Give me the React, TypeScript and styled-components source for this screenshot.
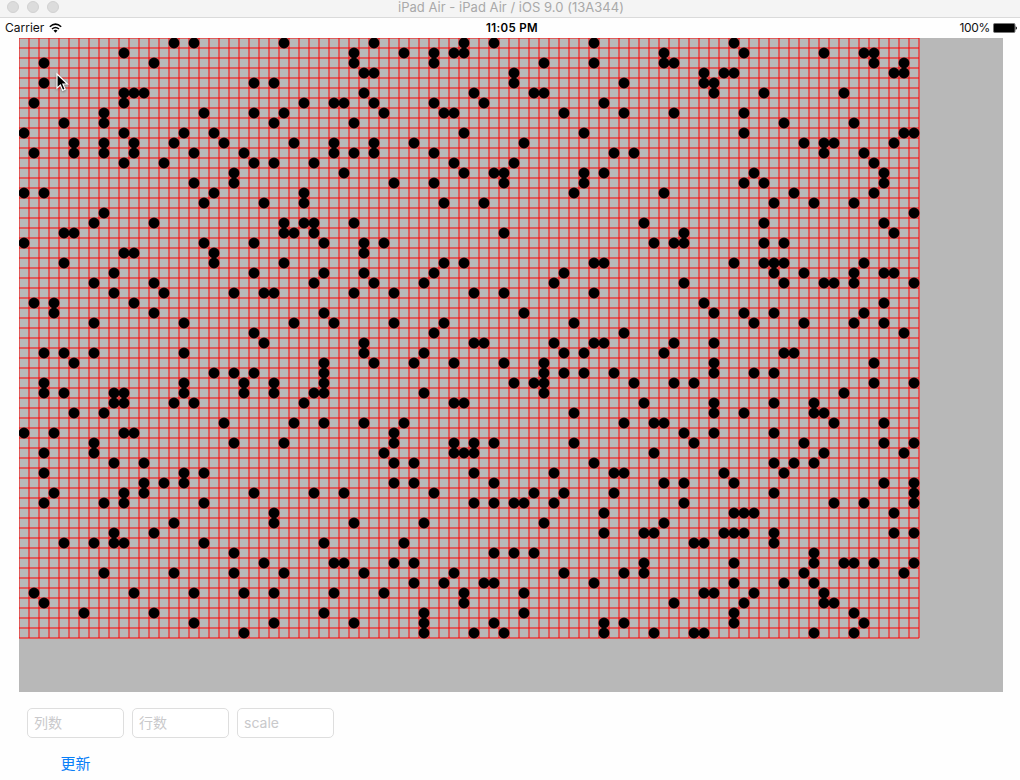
import React from "react";
import styled, { createGlobalStyle } from "styled-components";

const GlobalStyle = createGlobalStyle`
  * { box-sizing: border-box; }
  body {
    margin: 0;
    background: #fefefe;
    font-family: Inter, "Noto Sans CJK SC", sans-serif;
  }
`;

const CELL = 10;
const COLS = 90;
const ROWS = 60;

/* Live columns of every row, top to bottom. */
const LIVE: number[][] = [
  [15, 17, 26, 35, 44, 47, 57, 71],
  [10, 33, 38, 41, 43, 44, 64, 72, 80, 84, 85],
  [2, 13, 33, 41, 52, 57, 64, 65, 85, 88],
  [34, 35, 49, 68, 70, 71, 87, 88],
  [2, 23, 25, 49, 60, 68, 69],
  [10, 11, 12, 34, 45, 51, 52, 69, 74, 82],
  [1, 10, 28, 31, 32, 35, 41, 46, 58],
  [8, 18, 23, 26, 36, 42, 43, 54, 60, 65, 72],
  [4, 8, 25, 33, 76, 83],
  [0, 10, 16, 19, 44, 56, 72, 88, 89],
  [5, 8, 11, 15, 20, 27, 31, 35, 39, 50, 78, 80, 81, 87],
  [1, 5, 8, 11, 17, 22, 31, 33, 35, 41, 59, 61, 80, 84],
  [10, 14, 23, 25, 29, 43, 49, 85],
  [21, 32, 44, 47, 48, 56, 58, 73, 86],
  [17, 21, 37, 41, 48, 56, 72, 74, 86],
  [0, 2, 19, 28, 55, 64, 77, 85],
  [18, 24, 28, 42, 46, 75, 79, 83],
  [8, 89],
  [7, 13, 26, 28, 29, 33, 62, 74, 86],
  [4, 5, 26, 27, 29, 48, 66, 87],
  [0, 18, 23, 30, 34, 36, 63, 65, 66, 74, 76],
  [10, 11, 19, 34],
  [4, 19, 26, 42, 44, 57, 58, 71, 74, 75, 76, 84],
  [9, 23, 30, 34, 41, 54, 75, 78, 83, 86, 87],
  [7, 13, 29, 35, 40, 53, 66, 76, 80, 81, 83, 89],
  [9, 14, 21, 24, 25, 33, 37, 45, 48, 57],
  [1, 3, 11, 68, 86],
  [3, 13, 30, 50, 69, 72, 75, 84],
  [7, 16, 27, 31, 37, 42, 55, 73, 78, 83, 86],
  [23, 41, 60, 88],
  [24, 34, 45, 46, 53, 57, 58, 65, 69],
  [2, 4, 7, 16, 34, 40, 54, 56, 64, 76, 77],
  [5, 30, 35, 39, 43, 48, 52, 69, 85],
  [19, 21, 23, 30, 52, 54, 56, 59, 69, 73, 75],
  [2, 16, 22, 25, 30, 49, 51, 52, 61, 65, 67, 85, 89],
  [2, 4, 9, 10, 16, 22, 25, 29, 30, 40, 52, 82],
  [9, 10, 15, 17, 28, 43, 44, 62, 69, 75, 79],
  [5, 8, 55, 69, 72, 79, 80],
  [20, 27, 30, 34, 38, 60, 63, 64, 81, 86],
  [0, 3, 10, 11, 37, 66, 69, 75],
  [7, 21, 26, 37, 43, 45, 47, 55, 67, 78, 86, 89],
  [2, 7, 36, 43, 44, 45, 63, 80, 88],
  [9, 12, 37, 39, 57, 75, 77, 79],
  [2, 16, 18, 45, 53, 59, 60, 70, 76],
  [12, 14, 16, 37, 39, 47, 64, 66, 71, 86, 89],
  [3, 10, 12, 23, 29, 32, 41, 51, 54, 59, 75, 89],
  [2, 8, 10, 18, 45, 47, 49, 50, 53, 66, 81, 84, 89],
  [25, 58, 71, 72, 73, 87],
  [15, 25, 33, 40, 52, 64],
  [9, 13, 58, 62, 63, 70, 71, 72, 75, 87, 89],
  [4, 7, 9, 10, 18, 30, 38, 67, 68, 75],
  [21, 47, 49, 51, 79],
  [24, 31, 32, 37, 39, 62, 71, 79, 82, 83, 85, 89],
  [8, 15, 21, 26, 34, 43, 54, 60, 62, 78, 88],
  [39, 42, 46, 47, 57, 71, 76, 79],
  [1, 11, 17, 22, 25, 31, 36, 44, 50, 68, 69, 73, 80],
  [2, 44, 65, 72, 80, 81],
  [6, 13, 30, 40, 50, 71, 83],
  [17, 25, 33, 40, 47, 58, 60, 71, 84],
  [22, 40, 45, 48, 58, 63, 67, 68, 79, 83],
];

const Screen = styled.div`
  position: relative;
  width: 1020px;
  height: 780px;
  overflow: hidden;
  display: flex;
  flex-direction: column;
  background: #fefefe;
`;

const TitleBar = styled.header`
  display: grid;
  grid-template-columns: 1fr auto 1fr;
  align-items: center;
  height: 18px;
  padding: 0 0 3px 7px;
  background: #f4f4f4;
  border-bottom: 1px solid #dadada;
`;

const Lights = styled.div`
  display: flex;
  gap: 8px;
`;

const Light = styled.span`
  width: 12px;
  height: 12px;
  border-radius: 50%;
  background: #dcdcdc;
  border: 1px solid #d1d1d1;
`;

const Title = styled.h1`
  margin: 0;
  padding-right: 5px;
  font-size: 13px;
  line-height: 14px;
  font-weight: 400;
  letter-spacing: 0.03px;
  color: #a9a9a9;
  white-space: nowrap;
`;

const StatusBar = styled.div`
  display: grid;
  grid-template-columns: 1fr auto 1fr;
  align-items: center;
  height: 20px;
  padding: 0 3px 0 5px;
  font-size: 12px;
  line-height: 20px;
  color: #111;
`;

const StatusGroup = styled.div<{ $end?: boolean }>`
  display: flex;
  align-items: center;
  justify-content: ${(p) => (p.$end ? "flex-end" : "flex-start")};
  gap: ${(p) => (p.$end ? 3 : 5)}px;
  letter-spacing: ${(p) => (p.$end ? "-0.3px" : "normal")};
`;

const Clock = styled.div`
  padding-left: 2px;
  font-size: 11.5px;
  font-weight: 600;
  letter-spacing: 0.35px;
  color: #000;
`;

const Board = styled.main`
  width: 984px;
  height: 654px;
  margin-left: 19px;
  background: #b8b8b8;
`;

const Grid = styled.svg`
  display: block;
`;

const Form = styled.form`
  display: flex;
  flex-direction: column;
  align-items: flex-start;
  gap: 15px;
  padding: 16px 27px 0;
`;

const Fields = styled.div`
  display: flex;
  gap: 8px;
`;

const Field = styled.input`
  width: 97px;
  height: 30px;
  padding: 0 6px 2px;
  border: 1px solid #dedede;
  border-radius: 5px;
  background: #fff;
  outline: none;
  font: 14px Inter, "Noto Sans CJK SC", sans-serif;
  &::placeholder {
    color: #c9c9cb;
    opacity: 1;
  }
`;

const UpdateButton = styled.button`
  width: 97px;
  height: 22px;
  padding: 0;
  border: 0;
  background: none;
  font: 15px/22px Inter, "Noto Sans CJK SC", sans-serif;
  color: #0a80f8;
`;

const Pointer = styled.svg`
  position: absolute;
  left: 55px;
  top: 72px;
  filter: drop-shadow(0 1px 1px rgba(0, 0, 0, 0.35));
`;

const verticals = Array.from({ length: COLS + 1 }, (_, i) => `M${i * CELL} 0V${ROWS * CELL}`).join("");
const horizontals = Array.from({ length: ROWS + 1 }, (_, i) => `M0 ${i * CELL}H${COLS * CELL}`).join("");

function LifeGrid() {
  return (
    <Grid width={COLS * CELL + 1} height={ROWS * CELL + 1}>
      <path d={verticals} stroke="#f00" strokeWidth="1" />
      <path d={horizontals} stroke="#f00" strokeWidth="1" />
      {LIVE.flatMap((cols, row) =>
        cols.map((col) => (
          <circle key={`${row}-${col}`} cx={col * CELL + 5} cy={row * CELL + 5} r={5.45} />
        ))
      )}
    </Grid>
  );
}

function Wifi() {
  return (
    <svg width="13" height="10" viewBox="0 0 13 10" fill="none" stroke="#000" strokeWidth="1.5">
      <path d="M0.8 3.7Q6.5 -1.5 12.2 3.7" />
      <path d="M3 6Q6.5 2.9 10 6" />
      <path d="M4.5 7.6Q6.5 6 8.5 7.6L6.5 9.7Z" fill="#000" stroke="none" />
    </svg>
  );
}

function Battery() {
  return (
    <svg width="24" height="10" viewBox="0 0 24 10">
      <rect x="0.5" y="0.5" width="21.5" height="9" rx="1.3" fill="#000" stroke="#777" />
      <path d="M22.6 3.2Q24 3.6 24 5T22.6 6.8Z" fill="#111" />
    </svg>
  );
}

export default function App() {
  return (
    <Screen>
      <GlobalStyle />
      <TitleBar>
        <Lights>
          <Light />
          <Light />
          <Light />
        </Lights>
        <Title>iPad Air - iPad Air / iOS 9.0 (13A344)</Title>
      </TitleBar>
      <StatusBar>
        <StatusGroup>
          Carrier
          <Wifi />
        </StatusGroup>
        <Clock>11:05 PM</Clock>
        <StatusGroup $end>
          100%
          <Battery />
        </StatusGroup>
      </StatusBar>
      <Board>
        <LifeGrid />
      </Board>
      <Form>
        <Fields>
          <Field placeholder="列数" />
          <Field placeholder="行数" />
          <Field placeholder="scale" />
        </Fields>
        <UpdateButton type="button">更新</UpdateButton>
      </Form>
      <Pointer width="16" height="22" viewBox="0 0 16 22">
        <path
          d="M2 2V16.2L5.4 13L7.7 18.4L10.2 17.3L7.9 12H12.4Z"
          fill="#000"
          stroke="#fff"
          strokeWidth="1.2"
        />
      </Pointer>
    </Screen>
  );
}
